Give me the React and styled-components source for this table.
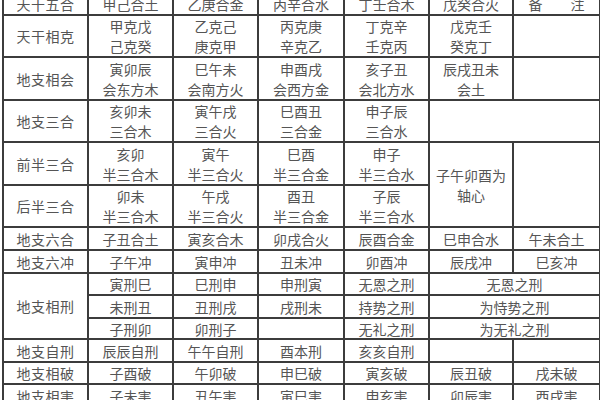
import React from "react";
import styled, { createGlobalStyle } from "styled-components";

const GlobalStyle = createGlobalStyle`
  html, body {
    margin: 0;
    background: #ffffff;
  }
  body {
    font-family: "Noto Sans CJK SC", "Noto Sans", sans-serif;
  }
`;

const Page = styled.div`
  width: 600px;
  height: 400px;
  overflow: hidden;
  padding-left: 2px;
  box-sizing: border-box;
`;

const Table = styled.table`
  margin-top: -9px;
  width: 597px;
  border-collapse: collapse;
  table-layout: fixed;
  color: #555555;
  font-size: 14px;
`;

const Row = styled.tr`
  height: ${(p) => p.$h}px;
`;

const Cell = styled.td`
  border: 2px solid #3c3c3c;
  padding: 0;
  text-align: center;
  vertical-align: middle;
  line-height: ${(p) => (p.$tall ? 20 : 18)}px;
  white-space: nowrap;
  overflow: hidden;
`;

const Label = styled(Cell)`
  letter-spacing: 0.5px;
`;

const widths = [85, 85, 85, 86, 85, 84, 87];

const Two = ({ a, b }) => (
  <>
    {a}
    <br />
    {b}
  </>
);

export default function App() {
  return (
    <Page>
      <GlobalStyle />
      <Table>
        <colgroup>
          {widths.map((w, i) => (
            <col key={i} style={{ width: w }} />
          ))}
        </colgroup>
        <tbody>
          <Row $h={23}>
            <Label>天干五合</Label>
            <Cell>甲己合土</Cell>
            <Cell>乙庚合金</Cell>
            <Cell>丙辛合水</Cell>
            <Cell>丁壬合木</Cell>
            <Cell>戊癸合火</Cell>
            <Cell>备　　注</Cell>
          </Row>
          <Row $h={42}>
            <Label>天干相克</Label>
            <Cell $tall><Two a="甲克戊" b="己克癸" /></Cell>
            <Cell $tall><Two a="乙克己" b="庚克甲" /></Cell>
            <Cell $tall><Two a="丙克庚" b="辛克乙" /></Cell>
            <Cell $tall><Two a="丁克辛" b="壬克丙" /></Cell>
            <Cell $tall><Two a="戊克壬" b="癸克丁" /></Cell>
            <Cell />
          </Row>
          <Row $h={43}>
            <Label>地支相会</Label>
            <Cell $tall><Two a="寅卯辰" b="会东方木" /></Cell>
            <Cell $tall><Two a="巳午未" b="会南方火" /></Cell>
            <Cell $tall><Two a="申酉戌" b="会西方金" /></Cell>
            <Cell $tall><Two a="亥子丑" b="会北方水" /></Cell>
            <Cell $tall><Two a="辰戌丑未" b="会土" /></Cell>
            <Cell />
          </Row>
          <Row $h={42}>
            <Label>地支三合</Label>
            <Cell $tall><Two a="亥卯未" b="三合木" /></Cell>
            <Cell $tall><Two a="寅午戌" b="三合火" /></Cell>
            <Cell $tall><Two a="巳酉丑" b="三合金" /></Cell>
            <Cell $tall><Two a="申子辰" b="三合水" /></Cell>
            <Cell colSpan={2} />
          </Row>
          <Row $h={43}>
            <Label>前半三合</Label>
            <Cell $tall><Two a="亥卯" b="半三合木" /></Cell>
            <Cell $tall><Two a="寅午" b="半三合火" /></Cell>
            <Cell $tall><Two a="巳酉" b="半三合金" /></Cell>
            <Cell $tall><Two a="申子" b="半三合水" /></Cell>
            <Cell rowSpan={2} $tall><Two a="子午卯酉为" b="轴心" /></Cell>
            <Cell rowSpan={2} />
          </Row>
          <Row $h={42}>
            <Label>后半三合</Label>
            <Cell $tall><Two a="卯未" b="半三合木" /></Cell>
            <Cell $tall><Two a="午戌" b="半三合火" /></Cell>
            <Cell $tall><Two a="酉丑" b="半三合金" /></Cell>
            <Cell $tall><Two a="子辰" b="半三合水" /></Cell>
          </Row>
          <Row $h={23}>
            <Label>地支六合</Label>
            <Cell>子丑合土</Cell>
            <Cell>寅亥合木</Cell>
            <Cell>卯戌合火</Cell>
            <Cell>辰酉合金</Cell>
            <Cell>巳申合水</Cell>
            <Cell>午未合土</Cell>
          </Row>
          <Row $h={23}>
            <Label>地支六冲</Label>
            <Cell>子午冲</Cell>
            <Cell>寅申冲</Cell>
            <Cell>丑未冲</Cell>
            <Cell>卯酉冲</Cell>
            <Cell>辰戌冲</Cell>
            <Cell>巳亥冲</Cell>
          </Row>
          <Row $h={22}>
            <Label rowSpan={3}>地支相刑</Label>
            <Cell>寅刑巳</Cell>
            <Cell>巳刑申</Cell>
            <Cell>申刑寅</Cell>
            <Cell>无恩之刑</Cell>
            <Cell colSpan={2}>无恩之刑</Cell>
          </Row>
          <Row $h={23}>
            <Cell>未刑丑</Cell>
            <Cell>丑刑戌</Cell>
            <Cell>戌刑未</Cell>
            <Cell>持势之刑</Cell>
            <Cell colSpan={2}>为恃势之刑</Cell>
          </Row>
          <Row $h={21}>
            <Cell>子刑卯</Cell>
            <Cell>卯刑子</Cell>
            <Cell />
            <Cell>无礼之刑</Cell>
            <Cell colSpan={2}>为无礼之刑</Cell>
          </Row>
          <Row $h={23}>
            <Label>地支自刑</Label>
            <Cell>辰辰自刑</Cell>
            <Cell>午午自刑</Cell>
            <Cell>酉本刑</Cell>
            <Cell>亥亥自刑</Cell>
            <Cell />
            <Cell />
          </Row>
          <Row $h={22}>
            <Label>地支相破</Label>
            <Cell>子酉破</Cell>
            <Cell>午卯破</Cell>
            <Cell>申巳破</Cell>
            <Cell>寅亥破</Cell>
            <Cell>辰丑破</Cell>
            <Cell>戌未破</Cell>
          </Row>
          <Row $h={23}>
            <Label>地支相害</Label>
            <Cell>子未害</Cell>
            <Cell>丑午害</Cell>
            <Cell>寅巳害</Cell>
            <Cell>申亥害</Cell>
            <Cell>卯辰害</Cell>
            <Cell>酉戌害</Cell>
          </Row>
        </tbody>
      </Table>
    </Page>
  );
}
